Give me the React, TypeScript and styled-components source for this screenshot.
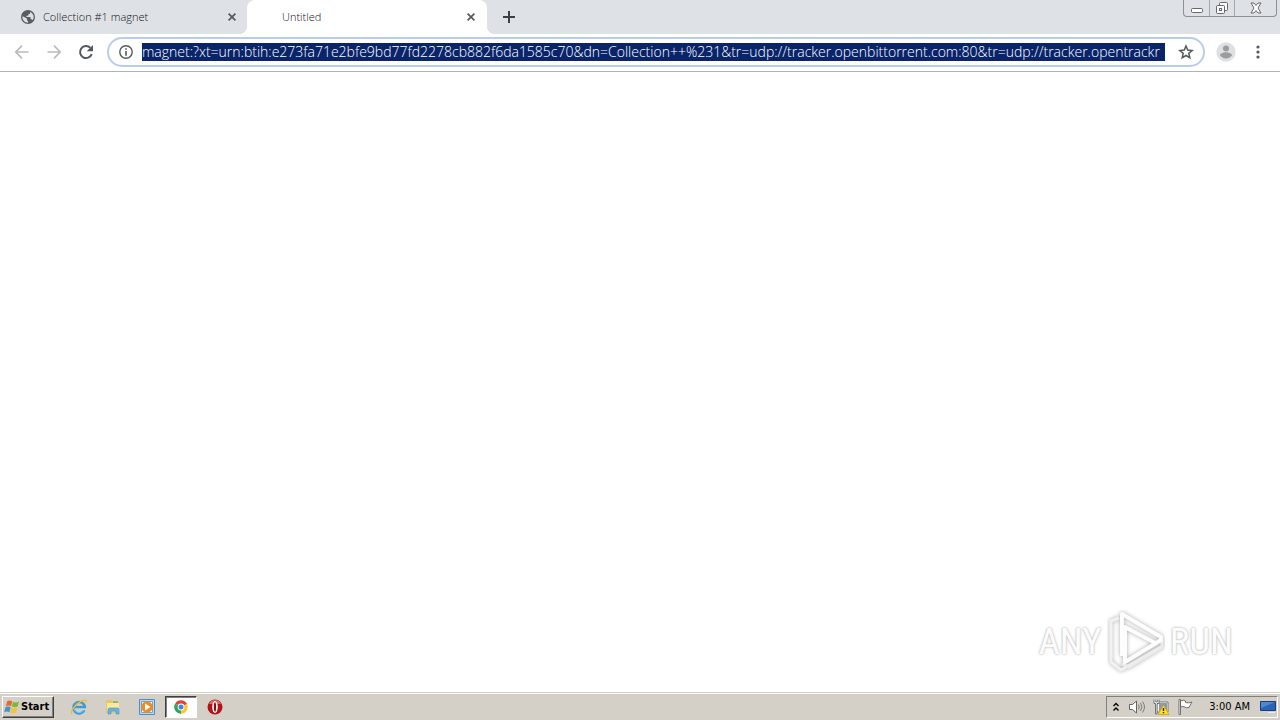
import React from "react";
import styled, { createGlobalStyle } from "styled-components";

const Global = createGlobalStyle`
  * { box-sizing: border-box; }
  body { margin: 0; background: #fff; font-family: "Open Sans", "Noto Sans", sans-serif; }
  button, input { font: inherit; margin: 0; padding: 0; border: 0; background: none; color: inherit; }
  svg { display: block; flex: none; }
`;

const Desktop = styled.div`
  display: flex;
  flex-direction: column;
  min-height: 100vh;
`;

const TabStrip = styled.header`
  display: flex;
  align-items: flex-start;
  height: 34px;
  background: #dee1e6;
`;

const Tabs = styled.nav`
  display: flex;
`;

const Tab = styled.div<{ $active?: boolean }>`
  position: relative;
  display: flex;
  align-items: center;
  width: ${(p) => (p.$active ? 240 : 247)}px;
  height: 34px;
  padding: 0 10px 0 ${(p) => (p.$active ? 35 : 20)}px;
  gap: 7px;
  background: ${(p) => (p.$active ? "#fff" : "transparent")};
  border-radius: 8px 8px 0 0;
  &::before, &::after {
    content: "";
    display: ${(p) => (p.$active ? "block" : "none")};
    position: absolute;
    bottom: 0;
    width: 8px;
    height: 8px;
  }
  &::before { left: -8px; background: radial-gradient(circle at 0 0, transparent 8px, #fff 8px); }
  &::after { right: -8px; background: radial-gradient(circle at 100% 0, transparent 8px, #fff 8px); }
`;

const TabTitle = styled.button`
  flex: 1;
  text-align: left;
  font-size: 11px;
  font-weight: 300;
  line-height: 16px;
  color: #111;
`;

const IconButton = styled.button<{ $w?: number; $color?: string }>`
  display: flex;
  align-items: center;
  justify-content: center;
  width: ${(p) => p.$w ?? 32}px;
  height: 32px;
  flex: none;
  color: ${(p) => p.$color ?? "#55585c"};
`;

const NewTab = styled(IconButton)`
  margin: 1px 0 0 6px;
`;

const CloseButton = styled(IconButton)`
  height: 16px;
`;

const WindowButtons = styled.div`
  display: flex;
  height: 17px;
  margin: 0 3px 0 auto;
  border: 1px solid #8d9096;
  border-top: 0;
  border-radius: 0 0 4px 4px;
`;

const WindowButton = styled.button<{ $w: number }>`
  display: flex;
  align-items: center;
  justify-content: center;
  width: ${(p) => p.$w}px;
  color: #64676c;
  & + & { border-left: 1px solid #a5a8ad; }
`;

const Toolbar = styled.div`
  display: flex;
  align-items: center;
  height: 38px;
  padding: 0 6px 1px;
  border-bottom: 1px solid #b0b2b4;
  background: #fff;
`;

const AddressBar = styled.form`
  display: flex;
  flex: 1;
  align-items: center;
  min-width: 0;
  height: 30px;
  margin: 0 5px;
  padding-right: 2px;
  border: 2px solid #b8cdee;
  border-radius: 15px;
`;

const Address = styled.input`
  flex: 1;
  min-width: 0;
  height: 18px;
  margin-right: 6px;
  font-size: 14px;
  font-weight: 300;
  line-height: 18px;
  color: #fff;
  background: #0a246a;
  outline: 0;
`;

const Page = styled.main`
  position: relative;
  flex: 1;
  background: #fff;
`;

const Watermark = styled.div`
  position: absolute;
  right: 47px;
  bottom: 18px;
  display: flex;
  align-items: center;
  gap: 5px;
  font-family: "Liberation Sans Narrow", "Roboto Condensed", "Liberation Sans", sans-serif;
  font-size: 37px;
  line-height: 64px;
  color: #fcfcfc;
  text-shadow: 0 0 2px #bbb, 0 0 3px #ccc;
`;

const Taskbar = styled.footer`
  display: flex;
  align-items: center;
  height: 28px;
  padding: 1px 2px 0;
  background: #d4d0c8;
  border-top: 1px solid #d4d0c8;
  box-shadow: inset 0 1px #fff;
  font-family: "DejaVu Sans Condensed", "DejaVu Sans", sans-serif;
  font-size: 11px;
  line-height: 16px;
  color: #000;
`;

const StartButton = styled.button`
  display: flex;
  align-items: center;
  gap: 1px;
  width: 52px;
  height: 22px;
  padding-left: 1px;
  margin-right: 9px;
  border: 1px solid;
  border-color: #fff #404040 #404040 #fff;
  box-shadow: inset -1px -1px #808080;
  font-weight: 700;
`;

const TaskButton = styled.button<{ $active?: boolean }>`
  display: flex;
  align-items: center;
  justify-content: center;
  width: 32px;
  height: 22px;
  margin-right: 2px;
  border: 1px solid transparent;
  ${(p) => p.$active && "border-color: #404040 #fff #fff #404040; background: #fff; box-shadow: inset 1px 1px #808080;"}
`;

const Tray = styled.div`
  display: flex;
  align-items: center;
  height: 22px;
  margin-left: auto;
  border: 1px solid;
  border-color: #808080 #fff #fff #808080;
`;

const TrayButton = styled.button<{ $w: number }>`
  display: flex;
  align-items: center;
  justify-content: center;
  width: ${(p) => p.$w}px;
  height: 20px;
`;

const Clock = styled.time`
  padding: 0 9px 0 12px;
  white-space: nowrap;
`;

const Cross = () => (
  <svg width="8" height="8" viewBox="0 0 8 8" stroke="currentColor" strokeWidth="1.7">
    <path d="M.6.6l6.8 6.8M7.4.6L.6 7.4" />
  </svg>
);

const Globe = () => (
  <svg width="16" height="16" viewBox="0 0 16 16">
    <circle cx="8" cy="8" r="7" fill="#5a5e63" />
    <path d="M2.7 7.2l4.2 2.3v1.2c0 .7.5 1.1 1.1 1.2v1.8C4.900 13.700 2.400 11.200 2.400 8zM10 2.900c2.200.8 3.700 2.800 3.700 5.100 0 1.300-.4 2.400-1.100 3.300-.3-.7-.7-1-1.400-1h-.6V8.600c0-.5-.3-.7-.7-.7H6.500V6.700h1.200c.5 0 .8-.3.8-.8V5h1c.4 0 .6-.4.6-.8z" fill="#dee1e6" />
  </svg>
);

const Arrow = ({ forward }: { forward?: boolean }) => (
  <svg width="16" height="16" viewBox="0 0 16 16" fill="none" stroke="currentColor" strokeWidth="1.7">
    <path d={forward ? "M1.500 8h12.500M8 1.700L14.200 8 8 14.300" : "M14.500 8H2M8 1.700L1.800 8 8 14.300"} />
  </svg>
);

const Reload = () => (
  <svg width="16" height="16" viewBox="0 0 16 16">
    <path d="M13.700 10.100A6 6 0 1 1 12.400 3.900" fill="none" stroke="currentColor" strokeWidth="2" />
    <path d="M15 1v6.300H8.700z" fill="currentColor" />
  </svg>
);

const Info = () => (
  <svg width="16" height="16" viewBox="0 0 16 16">
    <circle cx="8" cy="8" r="6.200" fill="none" stroke="currentColor" strokeWidth="1.400" />
    <path d="M7.200 4.200h1.600v1.600H7.200zM7.200 7h1.600v4.800H7.200z" fill="currentColor" />
  </svg>
);

const Star = () => (
  <svg width="16" height="16" viewBox="0 0 16 16" fill="none" stroke="currentColor" strokeWidth="1.500">
    <path d="M8 2l1.700 4.100 4.500.4-3.400 2.900 1 4.400L8 11.500l-3.800 2.300 1-4.400L1.800 6.500l4.500-.4z" />
  </svg>
);

const Person = () => (
  <svg width="20" height="20" viewBox="0 0 20 20">
    <circle cx="10" cy="10" r="9.700" fill="#dfe0e1" />
    <circle cx="10" cy="6.500" r="3" fill="#9a9c9e" />
    <path d="M4 13.300c0-2 4-3 6-3s6 1 6 3c-1.200 2-3.500 3.200-6 3.200s-4.800-1.200-6-3.200z" fill="#9a9c9e" />
  </svg>
);

const PlayLogo = () => (
  <svg width="58" height="64" viewBox="0 0 58 64" fill="none" strokeLinejoin="round">
    <g style={{ filter: "drop-shadow(0 0 2px #aaa)" }}>
      <path d="M12 8L4 11v41l10 8 40-23" stroke="#f1f1f1" strokeWidth="3" />
      <path d="M15 54l7 3 33-20v-7" stroke="#ececec" strokeWidth="3" />
      <path d="M15 46V4l39 23v3L18 52V17l32 17" stroke="#fdfdfd" strokeWidth="4" />
    </g>
  </svg>
);

const WindowsFlag = () => (
  <svg width="16" height="16" viewBox="0 0 16 16">
    <path d="M3.200 2.300c2-1.100 3.500-.8 5 0L7 7.300c-1.600-.9-3.200-1-5.200.1z" fill="#e9672b" />
    <path d="M9 2.700c2 1 3.700 1 6-.1l-1.300 5c-2.200 1.100-4 .9-5.900-.1z" fill="#79b93c" />
    <path d="M1.500 8.200c2-1 3.600-.9 5.200 0l-1.300 5c-1.700-.9-3.200-1-5.200 0z" fill="#3e94cf" />
    <path d="M7.500 8.500c2 1 3.800 1.100 6 .1l-1.300 5c-2.200 1-4 .9-6-.1z" fill="#f3c43a" />
  </svg>
);

const Explorer = () => (
  <svg width="18" height="18" viewBox="0 0 18 18" fill="none">
    <path d="M14.300 12.200A5.700 5.700 0 1 1 14.800 9H5" stroke="#3f9bd8" strokeWidth="2.600" />
    <path d="M13.800 11.900A5.400 5.400 0 0 1 4 10.900" stroke="#7dcdf0" strokeWidth="1" />
    <path d="M2.200 15.800C-.5 14.500 4.500 7 10 3.900c4-2.300 7-2.600 6.200.5" stroke="#e7bd39" strokeWidth="1.400" />
  </svg>
);

const Folder = () => (
  <svg width="18" height="18" viewBox="0 0 18 18">
    <path d="M2 3l1-1h5l1 2h6v11H2z" fill="#e5c865" />
    <path d="M3 5h12v8H3z" fill="#f8e8a0" />
    <path d="M9 4h5" stroke="#4ca35a" strokeWidth="1" />
    <path d="M4 16v-5l1-1h9l1 1v5h-3v-3H7v3z" fill="#69b5dc" stroke="#4596bf" strokeWidth=".6" />
  </svg>
);

const MediaPlayer = () => (
  <svg width="18" height="18" viewBox="0 0 18 18">
    <path d="M1.500 1.500h15v15h-15z" fill="#b9d8ef" stroke="#4a8fc7" />
    <path d="M3.500 3.500h11v11h-11z" fill="#e8f3fb" stroke="#6ba4d2" />
    <circle cx="9" cy="9" r="5.700" fill="#f28a1c" />
    <path d="M7 5.500v7L12.500 9z" fill="#fff" />
  </svg>
);

const Chrome = () => (
  <svg width="14" height="14" viewBox="0 0 14 14">
    <path d="M7 7L1.200 3.500A6.800 6.800 0 0 1 13 4z" fill="#e24335" />
    <path d="M7 7l6-3a6.800 6.800 0 0 1-6.200 9.800z" fill="#f9c931" />
    <path d="M7 7v6.800A6.800 6.800 0 0 1 1.200 3.500z" fill="#35a355" />
    <circle cx="7" cy="7" r="3.400" fill="#fff" />
    <circle cx="7" cy="7" r="2.500" fill="#4285e8" />
  </svg>
);

const Opera = () => (
  <svg width="16" height="16" viewBox="0 0 16 16">
    <circle cx="8" cy="8" r="7.500" fill="#b31217" />
    <path d="M2 5a6.500 6.500 0 0 1 12 0z" fill="#dc6964" />
    <ellipse cx="8" cy="8" rx="2.800" ry="5.900" fill="#fff" />
    <ellipse cx="8" cy="8" rx="1.100" ry="4.800" fill="#8d090d" />
  </svg>
);

const Speaker = () => (
  <svg width="18" height="18" viewBox="0 0 18 18" fill="#fff" stroke="#66645f">
    <path d="M1.500 6.500h3L8.500 3v12l-4-3.500h-3z" />
    <path d="M10.500 6.500q1.500 2.500 0 5M12.500 5q3 4 0 8M14.500 3.500q4 5.500 0 11" fill="none" strokeWidth=".8" />
  </svg>
);

const Network = () => (
  <svg width="18" height="18" viewBox="0 0 18 18">
    <path d="M6.500 4.500h9v9h-9z" fill="#8e9ba4" stroke="#f5f5f5" />
    <path d="M6 4h10v10H5" fill="none" stroke="#555" strokeWidth=".7" />
    <path d="M2 1.500v4h1.500V16H5V5.500h2v-4M3.800 1.500v2.500h1.500V1.500" fill="#fff" stroke="#555" strokeWidth=".8" />
    <path d="M11.500 7L17 16.500H6z" fill="#ffdf24" stroke="#c99c00" strokeWidth=".7" />
    <path d="M11.500 10v3M11.500 14v1.300" stroke="#332b00" strokeWidth="1.400" />
  </svg>
);

const ActionFlag = () => (
  <svg width="18" height="18" viewBox="0 0 18 18" fill="#fff" stroke="#66645f" strokeWidth=".9">
    <path d="M3 1.500h1.500v15H3zM4.500 3q3-1.500 5 0v1.500q3 1 6.500-.5L14 7.500l-1 2q-3 .8-5-.8-2-.5-3.500.3z" />
  </svg>
);

const Monitor = () => (
  <svg width="16" height="14" viewBox="0 0 16 14">
    <path d="M.5 1.500h15v9H.5z" fill="#2a65b5" stroke="#153f7a" />
    <path d="M1 2h14L1 8z" fill="#4c89cf" />
    <path d="M8 12.500h7" stroke="#e7edf4" />
  </svg>
);

export default function App() {
  return (
    <Desktop>
      <Global />
      <TabStrip>
        <Tabs aria-label="Tabs">
          <Tab>
            <Globe />
            <TabTitle>Collection #1 magnet</TabTitle>
            <CloseButton $w={10} aria-label="Close Collection #1 magnet"><Cross /></CloseButton>
          </Tab>
          <Tab $active>
            <TabTitle>Untitled</TabTitle>
            <CloseButton $w={12} aria-label="Close Untitled"><Cross /></CloseButton>
          </Tab>
        </Tabs>
        <NewTab aria-label="New tab" $color="#3c4043">
          <svg width="12" height="12" viewBox="0 0 12 12" stroke="currentColor" strokeWidth="2">
            <path d="M6 0v12M0 6h12" />
          </svg>
        </NewTab>
        <WindowButtons>
          <WindowButton $w={25} aria-label="Minimize">
            <svg width="12" height="16" viewBox="0 0 12 16"><rect x=".5" y="8.500" width="11" height="4" rx="1" fill="#fff" stroke="currentColor" /></svg>
          </WindowButton>
          <WindowButton $w={25} aria-label="Restore">
            <svg width="14" height="14" viewBox="0 0 14 14" fill="#f7f8fa" stroke="currentColor">
              <rect x="4.500" y="1.500" width="8" height="8" rx="1" />
              <rect x="1.500" y="4.500" width="8" height="8" rx="1" />
              <rect x="4.500" y="7.500" width="2" height="2" />
            </svg>
          </WindowButton>
          <WindowButton $w={42} aria-label="Close window">
            <svg width="12" height="12" viewBox="0 0 12 12" fill="#fff" stroke="currentColor">
              <path d="M1 1h3l2 2.500L8 1h3L8 6l3 5H8L6 8.500 4 11H1l3-5z" />
            </svg>
          </WindowButton>
        </WindowButtons>
      </TabStrip>
      <Toolbar>
        <IconButton aria-label="Back" $color="#b9bbbd"><Arrow /></IconButton>
        <IconButton aria-label="Forward" $color="#b9bbbd"><Arrow forward /></IconButton>
        <IconButton aria-label="Reload"><Reload /></IconButton>
        <AddressBar onSubmit={(e) => e.preventDefault()}>
          <IconButton type="button" $w={33} aria-label="Site information"><Info /></IconButton>
          <Address
            aria-label="Address"
            defaultValue="magnet:?xt=urn:btih:e273fa71e2bfe9bd77fd2278cb882f6da1585c70&dn=Collection++%231&tr=udp://tracker.openbittorrent.com:80&tr=udp://tracker.opentrackr"
          />
          <IconButton type="button" $w={30} aria-label="Bookmark"><Star /></IconButton>
        </AddressBar>
        <IconButton aria-label="Profile"><Person /></IconButton>
        <IconButton aria-label="Menu">
          <svg width="4" height="14" viewBox="0 0 4 14" fill="currentColor">
            <circle cx="2" cy="2" r="1.600" /><circle cx="2" cy="7" r="1.600" /><circle cx="2" cy="12" r="1.600" />
          </svg>
        </IconButton>
      </Toolbar>
      <Page>
        <Watermark>
          <span>ANY</span>
          <PlayLogo />
          <span>RUN</span>
        </Watermark>
      </Page>
      <Taskbar>
        <StartButton><WindowsFlag />Start</StartButton>
        <TaskButton aria-label="Internet Explorer"><Explorer /></TaskButton>
        <TaskButton aria-label="File Explorer"><Folder /></TaskButton>
        <TaskButton aria-label="Media Player"><MediaPlayer /></TaskButton>
        <TaskButton $active aria-label="Chrome"><Chrome /></TaskButton>
        <TaskButton aria-label="Opera"><Opera /></TaskButton>
        <Tray>
          <TrayButton $w={18} aria-label="Show hidden icons">
            <svg width="6" height="10" viewBox="0 0 6 10" fill="none" stroke="#000" strokeWidth="1.400">
              <path d="M.5 4L3 1.500 5.500 4M.5 8.500L3 6l2.500 2.500" />
            </svg>
          </TrayButton>
          <TrayButton $w={24} aria-label="Volume"><Speaker /></TrayButton>
          <TrayButton $w={24} aria-label="Network"><Network /></TrayButton>
          <TrayButton $w={24} aria-label="Action center"><ActionFlag /></TrayButton>
          <Clock>3:00 AM</Clock>
          <TrayButton $w={18} aria-label="Show desktop"><Monitor /></TrayButton>
        </Tray>
      </Taskbar>
    </Desktop>
  );
}
